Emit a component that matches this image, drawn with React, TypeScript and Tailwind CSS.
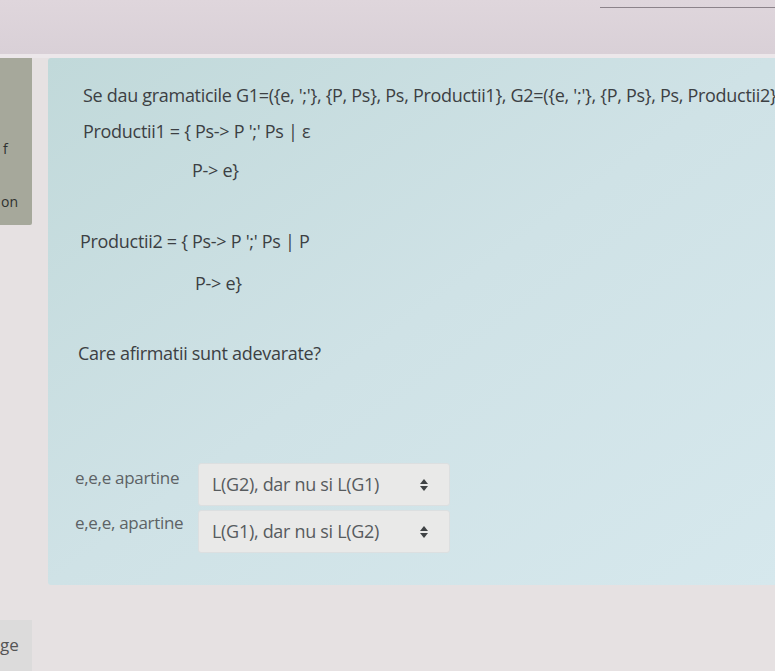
const SelectBox = ({ value }: { value: string }) => (
  <div className="flex h-[43px] w-[252px] items-center justify-between rounded-[3px] border border-[#dcdfe0] bg-[#e9e9e8] pl-[13px] pr-[20px] text-[18px] tracking-[-0.3px] text-[#575b5e]">
    <span>{value}</span>
    <svg width="10" height="16" viewBox="0 0 10 16" className="text-[#3f4244]">
      <path d="M5 2 L9 7 H1 Z" fill="currentColor" />
      <path d="M5 14 L9 9 H1 Z" fill="currentColor" />
    </svg>
  </div>
);

export default function App() {
  return (
    <div
      className="flex h-[671px] w-[775px] flex-col overflow-hidden bg-[#e6e1e2] text-[#3c4043]"
      style={{ fontFamily: '"Open Sans", "Noto Sans", sans-serif' }}
    >
      {/* header band */}
      <div className="h-[54px] shrink-0 bg-gradient-to-b from-[#dfd6dc] to-[#d9d0d7]">
        <div className="ml-[600px] h-[8px] border-b border-[#8c838a]" />
      </div>
      <div className="h-[4px] shrink-0 bg-[#ece7ea]" />

      <div className="flex flex-1">
        {/* left info column */}
        <div className="w-[32px] shrink-0">
          <div className="flex h-[167px] flex-col items-start rounded-br-[2px] bg-[#a6a89b] pl-[1px] text-[14px] text-[#2f3230]">
            <span className="ml-[2px] mt-[80px]">f</span>
            <span className="mt-[32px]">on</span>
          </div>
          <div className="mt-[395px] flex h-[60px] items-start bg-[#dcdbdb] pt-[12px] text-[17px] text-[#555]">
            <span>ge</span>
          </div>
        </div>

        {/* question content */}
        <div className="ml-[16px] flex h-[527px] flex-1 flex-col rounded-l-[3px] bg-gradient-to-br from-[#c1d9da] via-[#cfe2e6] to-[#d6e8ed] pl-[35px] pt-[22px] text-[18px] tracking-[-0.3px]">
          <p className="whitespace-nowrap leading-[30px]">
            Se dau gramaticile G1=({'{'}e, ';'{'}'}, {'{'}P, Ps{'}'}, Ps, Productii1{'}'}, G2=({'{'}e, ';'{'}'}, {'{'}P, Ps{'}'}, Ps, Productii2{'}'}
          </p>
          <p className="mt-[6px] leading-[30px]">Productii1 = {'{'} Ps-&gt; P ';' Ps | ε</p>
          <p className="ml-[109px] mt-[9px] leading-[30px]">P-&gt; e{'}'}</p>

          <p className="ml-[-3px] mt-[41px] leading-[30px]">Productii2 = {'{'} Ps-&gt; P ';' Ps | P</p>
          <p className="ml-[112px] mt-[12px] leading-[30px]">P-&gt; e{'}'}</p>

          <p className="ml-[-5px] mt-[40px] leading-[30px]">Care afirmatii sunt adevarate?</p>

          <div className="ml-[-8px] mt-[95px] flex flex-col gap-[4px] text-[17px] text-[#5d6265]">
            <div className="flex items-start gap-[14px]">
              <span className="w-[109px] whitespace-nowrap pt-[2px]">e,e,e apartine</span>
              <SelectBox value="L(G2), dar nu si L(G1)" />
            </div>
            <div className="flex items-start gap-[14px]">
              <span className="w-[109px] whitespace-nowrap">e,e,e, apartine</span>
              <SelectBox value="L(G1), dar nu si L(G2)" />
            </div>
          </div>
        </div>
      </div>
    </div>
  );
}
